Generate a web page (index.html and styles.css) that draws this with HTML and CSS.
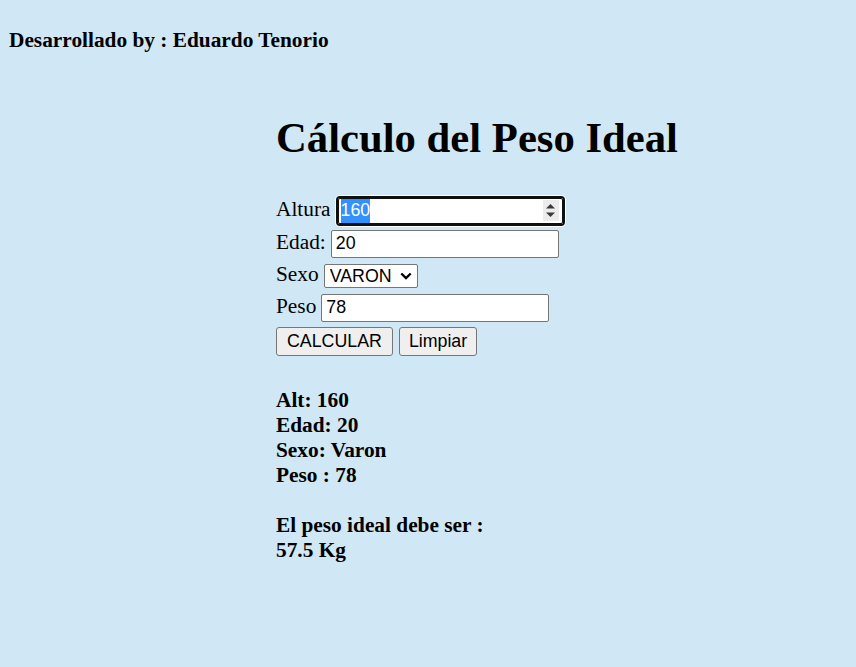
FILE: index.html
```html
<!DOCTYPE html>
<html lang="es">
<head>
<meta charset="utf-8">
<title>Cálculo del Peso Ideal</title>
<link rel="stylesheet" href="styles.css">
</head>
<body>
<p class="credit">Desarrollado by : Eduardo Tenorio</p>
<main class="calc">
  <h1 class="title">Cálculo del Peso Ideal</h1>
  <form class="form">
    <div class="row">
      <label class="lbl">Altura</label>
      <div class="num-field">
        <span class="num-sel">160</span>
        <span class="spin">
          <svg width="9" height="13" viewBox="0 0 9 13"><polygon points="0,4.5 4.5,0 9,4.5" fill="#3a3a3a"/><polygon points="0,8.5 9,8.5 4.5,13" fill="#3a3a3a"/></svg>
        </span>
      </div>
    </div>
    <div class="row">
      <label class="lbl" for="edad">Edad:</label>
      <input class="txt" id="edad" type="text" value="20">
    </div>
    <div class="row row-sex">
      <label class="lbl" for="sexo">Sexo</label>
      <span class="select-wrap">
        <select class="sel" id="sexo"><option>VARON</option><option>MUJER</option></select>
        <svg class="chev" width="12" height="8" viewBox="0 0 12 8"><polyline points="1.3,1.5 6,6 10.7,1.5" fill="none" stroke="#000" stroke-width="2.4"/></svg>
      </span>
    </div>
    <div class="row">
      <label class="lbl" for="peso">Peso</label>
      <input class="txt" id="peso" type="text" value="78">
    </div>
    <div class="row row-btns">
      <button class="btn" type="button">CALCULAR</button>
      <button class="btn btn-narrow" type="button">Limpiar</button>
    </div>
  </form>
  <div class="results">
    <p class="res-block">Alt: 160<br>Edad: 20<br>Sexo: Varon<br>Peso : 78</p>
    <p class="res-block res-final">El peso ideal debe ser :<br>57.5 Kg</p>
  </div>
</main>
</body>
</html>
```

FILE: styles.css
```css
* {
  box-sizing: border-box;
}

body {
  margin: 0;
  background: #d0e8f5;
  font-family: "Liberation Serif", "Times New Roman", serif;
  color: #000;
}

.credit {
  margin: 0;
  padding: 28px 0 0 9px;
  font-size: 21.33px;
  line-height: 24px;
  font-weight: bold;
}

.calc {
  padding-left: 276px;
}

.title {
  margin: 61px 0 0;
  font-size: 42.7px;
  line-height: 49px;
  font-weight: bold;
}

.form {
  margin-top: 32px;
  display: flex;
  flex-direction: column;
}

.row {
  display: flex;
  align-items: center;
  gap: 5px;
  height: 33px;
}

.row-sex {
  height: 31px;
}

.row-btns {
  height: 35px;
  gap: 6px;
}

.lbl {
  font-size: 21.33px;
  line-height: 24px;
  padding-bottom: 4px;
}

.txt {
  width: 228px;
  height: 28px;
  margin: 0;
  padding: 0 4px;
  border: 1px solid #767676;
  border-radius: 2px;
  background: #fff;
  color: #000;
  font: 17.8px "Liberation Sans", Arial, sans-serif;
}

.num-field {
  width: 225px;
  height: 26px;
  margin-left: 2px;
  display: flex;
  align-items: stretch;
  justify-content: space-between;
  padding: 0 3px 0 2px;
  border: 1px solid #101010;
  outline: 2px solid #101010;
  box-shadow: 0 0 0 3px #fff;
  border-radius: 2px;
  background: #fff;
  font: 17.8px "Liberation Sans", Arial, sans-serif;
}

.num-sel {
  display: flex;
  align-items: center;
  background: #3390ff;
  color: #fff;
}

.spin {
  align-self: center;
  width: 16px;
  height: 21px;
  display: flex;
  align-items: center;
  justify-content: center;
  background: #ececec;
}

.select-wrap {
  position: relative;
  display: inline-flex;
}

.sel {
  appearance: none;
  -webkit-appearance: none;
  width: 94.5px;
  height: 24px;
  margin: 0;
  padding: 0 0 0 5px;
  border: 1px solid #767676;
  border-radius: 2px;
  background: #fff;
  color: #000;
  font: 17.8px "Liberation Sans", Arial, sans-serif;
}

.chev {
  position: absolute;
  right: 6px;
  top: 8px;
  pointer-events: none;
}

.btn {
  height: 29px;
  margin: 0;
  padding: 0 10px;
  border: 1px solid #767676;
  border-radius: 3px;
  background: #efefef;
  color: #000;
  font: 17.8px "Liberation Sans", Arial, sans-serif;
}

.btn-narrow {
  padding: 0 9px;
}

.results {
  margin-top: 29px;
  font-size: 21.33px;
  line-height: 25px;
  font-weight: bold;
}

.res-block {
  margin: 0;
}

.res-final {
  margin-top: 25px;
}
```
